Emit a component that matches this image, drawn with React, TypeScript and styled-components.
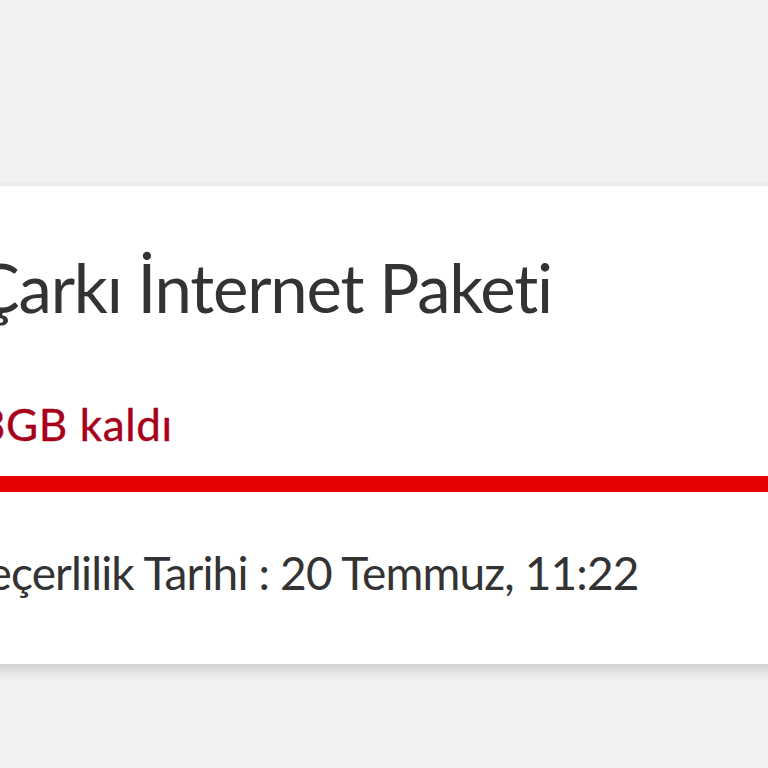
import React from "react";
import styled, { createGlobalStyle } from "styled-components";

const Global = createGlobalStyle`
  html, body {
    margin: 0;
    padding: 0;
    background: #f2f2f2;
    overflow: hidden;
    font-family: Lato, "Open Sans", sans-serif;
  }
`;

const Page = styled.div`
  width: 768px;
  height: 768px;
  padding-top: 186px;
  box-sizing: border-box;
  overflow: hidden;
`;

const Card = styled.section`
  margin-left: -60px;
  margin-right: -40px;
  height: 478px;
  box-sizing: border-box;
  background: #ffffff;
  box-shadow: 0 7px 12px rgba(0, 0, 0, 0.14), 0 -1px 6px rgba(0, 0, 0, 0.04);
  display: flex;
  flex-direction: column;
  padding-left: 35px;
`;

const Title = styled.h1`
  margin: 61px 0 0;
  font-size: 67px;
  line-height: 80px;
  font-weight: 400;
  letter-spacing: -1.2px;
  color: #333333;
  white-space: nowrap;
`;

const Line = styled.div<{ $indent?: number }>`
  margin-left: ${(p) => p.$indent ?? 0}px;
  white-space: nowrap;
`;

const Remaining = styled(Line)`
  margin-top: 71px;
  font-size: 44px;
  line-height: 52px;
  letter-spacing: 0.6px;
  color: #a8001b;
  -webkit-text-stroke: 0.4px #a8001b;
`;

const Bar = styled.div`
  margin-top: 26px;
  height: 16px;
  background: #e60000;
`;

const Validity = styled(Line)`
  margin-top: 54px;
  font-size: 46px;
  line-height: 54px;
  letter-spacing: -0.85px;
  color: #333333;
`;

export default function App() {
  return (
    <>
      <Global />
      <Page>
        <Card>
          <Title>Çarkı İnternet Paketi</Title>
          <Remaining $indent={5}>3GB kaldı</Remaining>
          <Bar />
          <Validity $indent={-20}>Geçerlilik Tarihi : 20 Temmuz, 11:22</Validity>
        </Card>
      </Page>
    </>
  );
}
